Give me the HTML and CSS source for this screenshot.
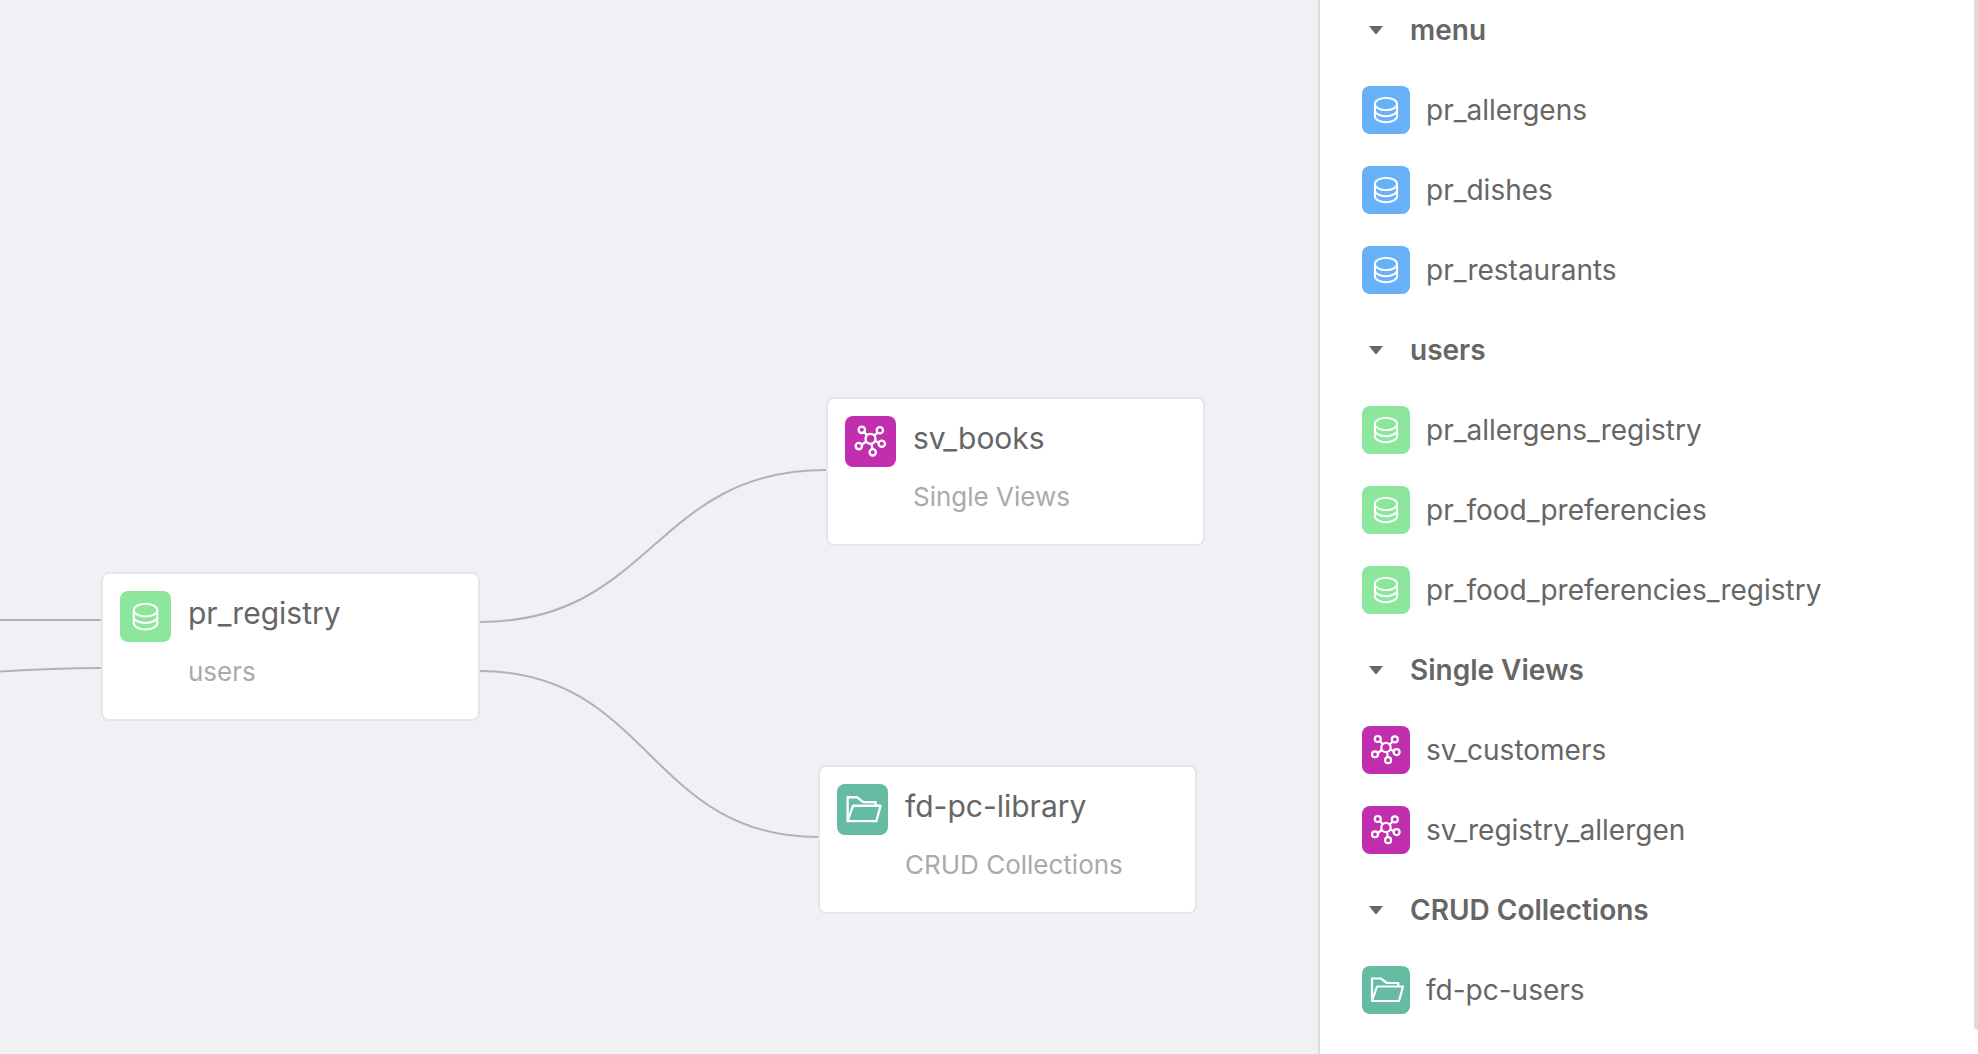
FILE: index.html
```html
<!DOCTYPE html>
<html lang="en">
<head>
<meta charset="utf-8">
<meta name="viewport" content="width=device-width, initial-scale=1">
<title>Data flow</title>
<link rel="stylesheet" href="styles.css">
</head>
<body>
<svg class="symbols" aria-hidden="true">
  <symbol id="database" viewBox="0 0 48 48">
    <g fill="none" stroke="#fff" stroke-width="1.9">
      <ellipse cx="24" cy="18" rx="11.1" ry="6.1"/>
      <path d="M12.9 18v12.2c0 3.3 5 6 11.100 6s11.1-2.7 11.1-6V18M12.9 24.2c0 3.3 5 6 11.1 6s11.1-2.7 11.1-6"/>
    </g>
  </symbol>
  <symbol id="network" viewBox="0 0 48 48">
    <g fill="none" stroke="#fff" stroke-width="2.2">
      <circle cx="24" cy="21.5" r="4.7"/>
      <circle cx="15.8" cy="13" r="3"/>
      <circle cx="32.8" cy="13.4" r="3"/>
      <circle cx="13" cy="28.3" r="3"/>
      <circle cx="34.6" cy="26.1" r="3"/>
      <circle cx="26.1" cy="34.2" r="3"/>
      <path d="M18 15.2l2.9 3M30.900 15.6l-3.600 2.7M15.700 27l4.200-3M31.7 25.1l-3.400-1.600M25.800 31.200l-.8-5.100"/>
    </g>
  </symbol>
  <symbol id="folder" viewBox="0 0 48 48">
    <path fill="none" stroke="#fff" stroke-width="2.2" stroke-linejoin="round" d="M10 35V12.5h8.8l6 4.500H36.300v3.500M10 35l5-14.5h26L37 35z"/>
  </symbol>
  <symbol id="caret" viewBox="0 0 14 8"><path fill="#666" d="M0 0h14L8 7.5q-1 1-2 0z"/></symbol>
</svg>
<div class="app">
  <main class="canvas">
    <svg class="edges" aria-hidden="true">
      <path d="M0 620H101"/>
      <path d="M-20 673C20 670 60 668 101 668"/>
      <path d="M480 622C653 622 653 470 826 470"/>
      <path d="M480 671C649 671 649 837 818 837"/>
    </svg>
    <article class="node node-registry">
      <svg class="icon green"><use href="#database"/></svg>
      <div><h2>pr_registry</h2><p>users</p></div>
    </article>
    <article class="node node-books">
      <svg class="icon magenta"><use href="#network"/></svg>
      <div><h2>sv_books</h2><p>Single Views</p></div>
    </article>
    <article class="node node-library">
      <svg class="icon teal"><use href="#folder"/></svg>
      <div><h2>fd-pc-library</h2><p>CRUD Collections</p></div>
    </article>
  </main>
  <aside class="sidebar">
    <button class="group" type="button" aria-expanded="true"><svg class="caret"><use href="#caret"/></svg>menu</button>
    <ul class="items">
      <li><svg class="icon blue"><use href="#database"/></svg>pr_allergens</li>
      <li><svg class="icon blue"><use href="#database"/></svg>pr_dishes</li>
      <li><svg class="icon blue"><use href="#database"/></svg>pr_restaurants</li>
    </ul>
    <button class="group" type="button" aria-expanded="true"><svg class="caret"><use href="#caret"/></svg>users</button>
    <ul class="items">
      <li><svg class="icon green"><use href="#database"/></svg>pr_allergens_registry</li>
      <li><svg class="icon green"><use href="#database"/></svg>pr_food_preferencies</li>
      <li><svg class="icon green"><use href="#database"/></svg>pr_food_preferencies_registry</li>
    </ul>
    <button class="group" type="button" aria-expanded="true"><svg class="caret"><use href="#caret"/></svg>Single Views</button>
    <ul class="items">
      <li><svg class="icon magenta"><use href="#network"/></svg>sv_customers</li>
      <li><svg class="icon magenta"><use href="#network"/></svg>sv_registry_allergen</li>
    </ul>
    <button class="group" type="button" aria-expanded="true"><svg class="caret"><use href="#caret"/></svg>CRUD Collections</button>
    <ul class="items">
      <li><svg class="icon teal"><use href="#folder"/></svg>fd-pc-users</li>
    </ul>
    <span class="scroll-thumb"></span>
  </aside>
</div>
</body>
</html>
```
FILE: styles.css
```css
* { box-sizing: border-box; }
body {
  margin: 0;
  background: #f0f1f5;
  color: #666;
  font-family: Inter, "Liberation Sans", sans-serif;
  font-size: 28px;
}
h2, p, ul { margin: 0; padding: 0; }
.symbols { position: absolute; width: 0; height: 0; }
.app { display: flex; min-height: 100vh; }

.canvas { position: relative; flex: 1; min-width: 0; overflow: hidden; }
.edges { position: absolute; inset: 0; width: 100%; height: 100%; }
.edges path { fill: none; stroke: #b1b1b7; stroke-width: 2; }

.node {
  position: absolute;
  display: flex;
  gap: 17px;
  width: 379px;
  height: 149px;
  padding: 17px;
  background: #fff;
  border: 2px solid #e6e6e6;
  border-radius: 8px;
}
.node-registry { left: 101px; top: 572px; }
.node-books { left: 826px; top: 397px; }
.node-library { left: 818px; top: 765px; }
.node .icon { width: 51px; height: 51px; }
.node h2 { font-size: 30px; font-weight: 400; line-height: 45px; }
.node p { margin-top: 16px; color: #aaa; font-size: 26px; line-height: 40px; }

.icon { flex: none; width: 48px; height: 48px; border-radius: 8px; }
.blue { background: #68b1f9; }
.green { background: #8ce69b; }
.magenta { background: #c22fae; }
.teal { background: #66bba3; }

.sidebar {
  position: relative;
  display: flex;
  flex: 0 0 660px;
  flex-direction: column;
  gap: 32px;
  padding: 6px 42px 40px;
  background: #fff;
  border-left: 2px solid #dcdcdf;
}
.group {
  display: flex;
  align-items: center;
  gap: 27px;
  height: 48px;
  padding: 0 0 0 7px;
  border: 0;
  background: none;
  color: inherit;
  font: inherit;
  font-weight: 600;
}
.caret { width: 14px; height: 8px; }
.items { display: flex; flex-direction: column; gap: 32px; list-style: none; }
.items li { display: flex; align-items: center; gap: 16px; }
.scroll-thumb {
  position: absolute;
  top: 0;
  right: 0;
  bottom: 24px;
  width: 4px;
  background: #dcdcdc;
  border-bottom-left-radius: 4px;
}
```
